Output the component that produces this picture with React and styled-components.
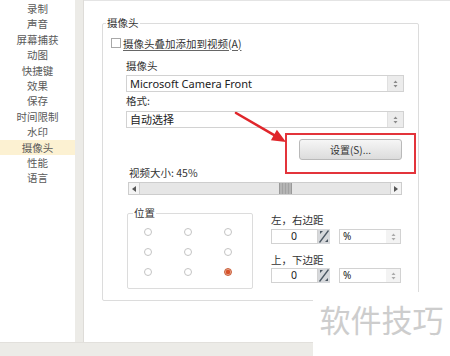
import React from 'react';
import styled, { createGlobalStyle } from 'styled-components';

const GlobalStyle = createGlobalStyle`
  html, body {
    margin: 0;
    padding: 0;
    background: #ffffff;
  }
  body {
    width: 450px;
    height: 356px;
    overflow: hidden;
    font-family: "Noto Sans CJK SC", "Noto Sans", sans-serif;
    color: #333;
  }
`;

const Frame = styled.div`
  position: relative;
  width: 450px;
  height: 356px;
  display: flex;
  flex-direction: column;
  background: #fff;
  overflow: hidden;
`;

const Main = styled.div`
  display: flex;
  height: 342px;
`;

const Sidebar = styled.ul`
  list-style: none;
  margin: 0;
  padding: 1px 0 0;
  width: 75px;
  background: #fff;
`;

const NavItem = styled.li`
  height: 15.4px;
  line-height: 15.4px;
  text-align: center;
  font-size: 10.5px;
  color: #5a5a5a;
  background: ${(p) => (p.$active ? '#fcf1d2' : 'transparent')};
`;

const Divider = styled.div`
  width: 8px;
  background: #ecebe7;
  border-right: 1px solid #dedcd8;
`;

const Content = styled.div`
  flex: 1;
  border-top: 1px solid #e4e4e4;
  padding: 22px 0 0 18px;
`;

const Group = styled.div`
  position: relative;
  box-sizing: border-box;
  width: 317px;
  height: 278px;
  border: 1px solid #dcdcdc;
  border-radius: 2px;
`;

const GroupTitle = styled.span`
  position: absolute;
  top: -8px;
  left: ${(p) => p.$left || 3}px;
  padding: 0 1px;
  background: #fff;
  font-size: 10.5px;
  line-height: 14px;
  color: #333;
`;

const CheckRow = styled.label`
  display: flex;
  align-items: center;
  gap: 2px;
  margin-top: 13px;
  padding-left: 8px;
  height: 12px;
  font-size: 10.5px;
  color: #333;
`;

const CheckBox = styled.span`
  width: 8px;
  height: 8px;
  border: 1px solid #a8a8a8;
  background: #fff;
`;

const Underlined = styled.span`
  text-decoration: underline;
  text-decoration-color: #666;
  text-underline-offset: 2px;
`;

const Inner = styled.div`
  display: flex;
  flex-direction: column;
  padding: 0 14px 0 23px;
`;

const FieldLabel = styled.div`
  height: 14px;
  font-size: 10.5px;
  line-height: 14px;
  color: #333;
  margin-top: ${(p) => p.$mt || 0}px;
  margin-left: ${(p) => p.$ml || 0}px;
`;

const Select = styled.div`
  display: flex;
  box-sizing: border-box;
  height: 17px;
  margin-top: ${(p) => p.$mt || 0}px;
  border: 1px solid #d2d2d2;
  background: #fff;
`;

const SelectText = styled.span`
  flex: 1;
  padding-left: 3px;
  font-family: ${(p) => (p.$latin ? '"Noto Sans", sans-serif' : 'inherit')};
  font-size: 11px;
  line-height: 15px;
  color: #222;
`;

const SelectButton = styled.span`
  width: 15px;
  display: flex;
  align-items: center;
  justify-content: center;
  background: #ececec;
  border-left: 1px solid #e0e0e0;
`;

const ButtonRow = styled.div`
  display: flex;
  justify-content: flex-end;
  margin-top: 11px;
  padding-right: 2px;
`;

const Highlight = styled.div`
  position: relative;
  display: flex;
  &::after {
    content: '';
    position: absolute;
    left: -14px;
    right: -14px;
    top: -6px;
    bottom: -14px;
    border: 2px solid #e3343b;
  }
`;

const PushButton = styled.button`
  display: block;
  width: 103px;
  height: 21px;
  padding: 0;
  border: 1px solid #b9b9b9;
  border-radius: 3px;
  background: linear-gradient(#f6f6f6, #dcdcdc);
  font-family: "Noto Sans CJK SC", "Noto Sans", sans-serif;
  font-size: 10px;
  color: #333;
`;

const Slider = styled.div`
  position: relative;
  display: flex;
  box-sizing: border-box;
  height: 13px;
  margin: 2px 2px 0 2px;
  border: 1px solid #cdcdcd;
  background: #e6e6e6;
`;

const SliderArrow = styled.span`
  width: 10px;
  display: flex;
  align-items: center;
  justify-content: center;
  background: #f4f4f4;
  border-${(p) => (p.$side === 'left' ? 'right' : 'left')}: 1px solid #cfcfcf;
`;

const SliderTrack = styled.span`
  position: relative;
  flex: 1;
`;

const Thumb = styled.span`
  position: absolute;
  top: 0;
  bottom: 0;
  width: 13px;
  background: repeating-linear-gradient(90deg, #b4b4b4 0 2px, #a2a2a2 2px 3px);
  border-left: 1px solid #999;
  border-right: 1px solid #999;
  box-sizing: border-box;
`;

const LowerRow = styled.div`
  display: flex;
  gap: 18px;
  margin-top: 18px;
  margin-left: 1px;
`;

const PosBox = styled.div`
  position: relative;
  box-sizing: border-box;
  width: 126px;
  height: 76px;
  border: 1px solid #dcdcdc;
  border-radius: 2px;
`;

const RadioGrid = styled.div`
  display: grid;
  grid-template-columns: repeat(3, 40px);
  grid-auto-rows: 20px;
  padding-top: 8px;
  justify-items: center;
  align-items: center;
`;

const Radio = styled.span`
  box-sizing: border-box;
  width: 8px;
  height: 8px;
  border-radius: 50%;
  border: 1px solid ${(p) => (p.$on ? '#c75a35' : '#c4c4c4')};
  background: ${(p) => (p.$on ? 'radial-gradient(circle, #d8522a 0 45%, #e9a58b 60%)' : '#fff')};
`;

const Margins = styled.div`
  display: flex;
  flex-direction: column;
  width: 130px;
`;

const InputRow = styled.div`
  display: flex;
  height: 15px;
  margin-top: ${(p) => p.$mt || 0}px;
`;

const NumberField = styled.span`
  box-sizing: border-box;
  width: 47px;
  border: 1px solid #d2d2d2;
  font-family: "Noto Sans", sans-serif;
  font-size: 10.5px;
  line-height: 13px;
  padding-left: 19px;
  color: #222;
`;

const Spin = styled.span`
  width: 12px;
  display: flex;
`;

const UnitSelect = styled.span`
  display: flex;
  box-sizing: border-box;
  width: 62px;
  margin-left: 9px;
  border: 1px solid #d2d2d2;
`;

const UnitText = styled.span`
  flex: 1;
  padding-left: 3px;
  font-family: "Noto Sans", sans-serif;
  font-size: 10px;
  line-height: 13px;
  color: #222;
`;

const UnitButton = styled.span`
  width: 14px;
  display: flex;
  align-items: center;
  justify-content: center;
  background: #f3f3f3;
`;

const Footer = styled.div`
  height: 14px;
  background: #ecebe7;
  border-top: 1px solid #e2e0dc;
  box-sizing: border-box;
`;

const Arrow = styled.svg`
  position: absolute;
  left: 230px;
  top: 105px;
`;

const Watermark = styled.div`
  position: absolute;
  left: 313px;
  top: 292px;
  right: 0;
  bottom: 0;
  background: #fff;
  display: flex;
  justify-content: center;
  padding-top: 9px;
  font-size: 31px;
  line-height: 36px;
  color: #cdcdcd;
`;

const navItems = ['录制', '声音', '屏幕捕获', '动图', '快捷键', '效果', '保存', '时间限制', '水印', '摄像头', '性能', '语言'];

const UpDown = ({ color = '#8a8a8a' }) => (
  <svg width="5" height="8" viewBox="0 0 5 8">
    <path d="M2.5 0.5 L4.5 3 L0.5 3 Z" fill={color} />
    <path d="M2.5 7.5 L4.5 5 L0.5 5 Z" fill={color} />
  </svg>
);

const SpinIcon = () => (
  <svg width="12" height="15" viewBox="0 0 12 15">
    <rect x="0" y="0" width="12" height="15" fill="#d6d8db" />
    <line x1="1.5" y1="13.5" x2="10.5" y2="1.5" stroke="#4a5661" strokeWidth="1.3" />
    <path d="M2 2 L5 2 L2 5 Z" fill="#4a5661" />
    <path d="M10 13 L7 13 L10 10 Z" fill="#4a5661" />
  </svg>
);

const MarginInput = ({ mt }) => (
  <InputRow $mt={mt}>
    <NumberField>0</NumberField>
    <Spin><SpinIcon /></Spin>
    <UnitSelect>
      <UnitText>%</UnitText>
      <UnitButton><UpDown color="#aaa" /></UnitButton>
    </UnitSelect>
  </InputRow>
);

export default function App() {
  const sizeRatio = 0.586;
  const radios = [0, 1, 2, 3, 4, 5, 6, 7, 8];

  return (
    <>
      <GlobalStyle />
      <Frame>
        <Main>
          <Sidebar>
            {navItems.map((item) => (
              <NavItem key={item} $active={item === '摄像头'}>{item}</NavItem>
            ))}
          </Sidebar>
          <Divider />
          <Content>
            <Group>
              <GroupTitle>摄像头</GroupTitle>
              <CheckRow>
                <CheckBox />
                <Underlined>摄像头叠加添加到视频(A)</Underlined>
              </CheckRow>
              <Inner>
                <FieldLabel $mt={10}>摄像头</FieldLabel>
                <Select $mt={2}>
                  <SelectText $latin>Microsoft Camera Front</SelectText>
                  <SelectButton><UpDown /></SelectButton>
                </Select>
                <FieldLabel $mt={2}>格式:</FieldLabel>
                <Select $mt={3}>
                  <SelectText>自动选择</SelectText>
                  <SelectButton><UpDown /></SelectButton>
                </Select>
                <ButtonRow>
                  <Highlight>
                    <PushButton>设置(S)...</PushButton>
                  </Highlight>
                </ButtonRow>
                <FieldLabel $mt={6} $ml={3}>视频大小: 45%</FieldLabel>
                <Slider>
                  <SliderArrow $side="left">
                    <svg width="4" height="6" viewBox="0 0 4 6"><path d="M0 3 L4 0 L4 6 Z" fill="#555" /></svg>
                  </SliderArrow>
                  <SliderTrack>
                    <Thumb style={{ left: `calc(${sizeRatio * 100}% - ${sizeRatio * 13}px)` }} />
                  </SliderTrack>
                  <SliderArrow $side="right">
                    <svg width="4" height="6" viewBox="0 0 4 6"><path d="M4 3 L0 0 L0 6 Z" fill="#555" /></svg>
                  </SliderArrow>
                </Slider>
                <LowerRow>
                  <PosBox>
                    <GroupTitle $left={5}>位置</GroupTitle>
                    <RadioGrid>
                      {radios.map((r) => (
                        <Radio key={r} $on={r === 8} />
                      ))}
                    </RadioGrid>
                  </PosBox>
                  <Margins>
                    <FieldLabel>左，右边距</FieldLabel>
                    <MarginInput mt={2} />
                    <FieldLabel $mt={9}>上，下边距</FieldLabel>
                    <MarginInput mt={1} />
                  </Margins>
                </LowerRow>
              </Inner>
            </Group>
          </Content>
        </Main>
        <Footer />
        <Arrow width="65" height="45" viewBox="0 0 65 45">
          <line x1="6" y1="8" x2="45" y2="30.6" stroke="#e0262b" strokeWidth="2.6" strokeLinecap="round" />
          <path d="M56 37 L40.9 35.2 L46.9 24.8 Z" fill="#e0262b" />
        </Arrow>
        <Watermark>软件技巧</Watermark>
      </Frame>
    </>
  );
}
